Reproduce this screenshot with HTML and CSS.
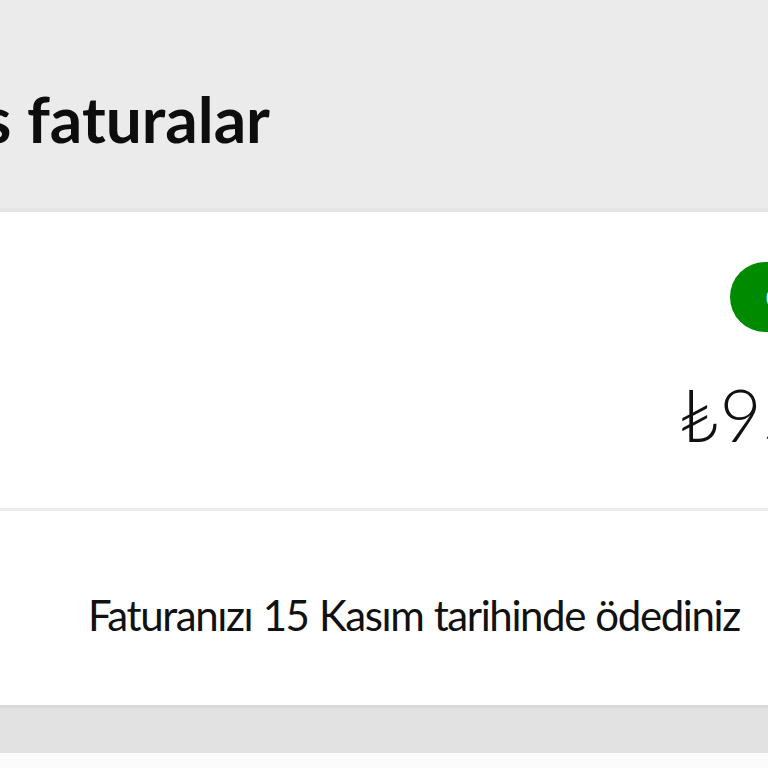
FILE: index.html
```html
<!DOCTYPE html>
<html lang="tr">
<head>
<meta charset="utf-8">
<link rel="stylesheet" href="styles.css">
</head>
<body>
<div class="page">
  <header class="head">
    <h1 class="title">Ödenmis faturalar</h1>
  </header>
  <section class="card">
    <div class="card-top">
      <span class="pill">Ödendi</span>
      <div class="amount">₺95,00</div>
    </div>
    <div class="divider"></div>
    <div class="card-bottom">
      <p class="note">Faturanızı 15 Kasım tarihinde ödediniz</p>
    </div>
  </section>
  <div class="gap"></div>
  <section class="card next"></section>
</div>
</body>
</html>
```
FILE: styles.css
```css
html, body {
  margin: 0;
  padding: 0;
  width: 768px;
  height: 768px;
  overflow: hidden;
  background: #ebebeb;
}
.page {
  display: flex;
  flex-direction: column;
  width: 768px;
  font-family: Lato, "Open Sans", "DejaVu Sans", sans-serif;
  color: #0d0d0d;
}
.head {
  height: 208px;
  width: 270px;
  display: flex;
  justify-content: flex-end;
  box-sizing: border-box;
  padding-top: 79px;
}
.title {
  margin: 0;
  white-space: nowrap;
  font-size: 64px;
  font-weight: 700;
  line-height: 80px;
  height: 80px;
}
.card {
  background: #ffffff;
  border-top: 4px solid #e4e4e4;
}
.card-top {
  height: 296px;
  box-sizing: border-box;
  padding-top: 50px;
  padding-left: 678px;
  display: flex;
  flex-direction: column;
  align-items: flex-start;
  white-space: nowrap;
}
.pill {
  margin-left: 52px;
  height: 70px;
  line-height: 70px;
  padding: 0 35px;
  border-radius: 35px;
  background: #008a00;
  color: #ffffff;
  font-size: 36px;
}
.amount {
  margin-top: 38px;
  font-size: 72px;
  font-weight: 300;
  line-height: 88px;
  color: #111111;
}
.divider {
  height: 3px;
  background: #ececec;
}
.card-bottom {
  height: 194px;
  box-sizing: border-box;
  padding-left: 88px;
  padding-top: 78px;
}
.note {
  margin: 0;
  font-size: 42px;
  letter-spacing: -1.4px;
  word-spacing: 1px;
  line-height: 52px;
  white-space: nowrap;
  color: #111111;
}
.gap {
  height: 48px;
  background: #e2e2e2;
  border-top: 3px solid #d9d9d9;
  box-sizing: border-box;
}
.next {
  height: 40px;
  border-top: 0;
  background: #fbfbfb;
}
```
